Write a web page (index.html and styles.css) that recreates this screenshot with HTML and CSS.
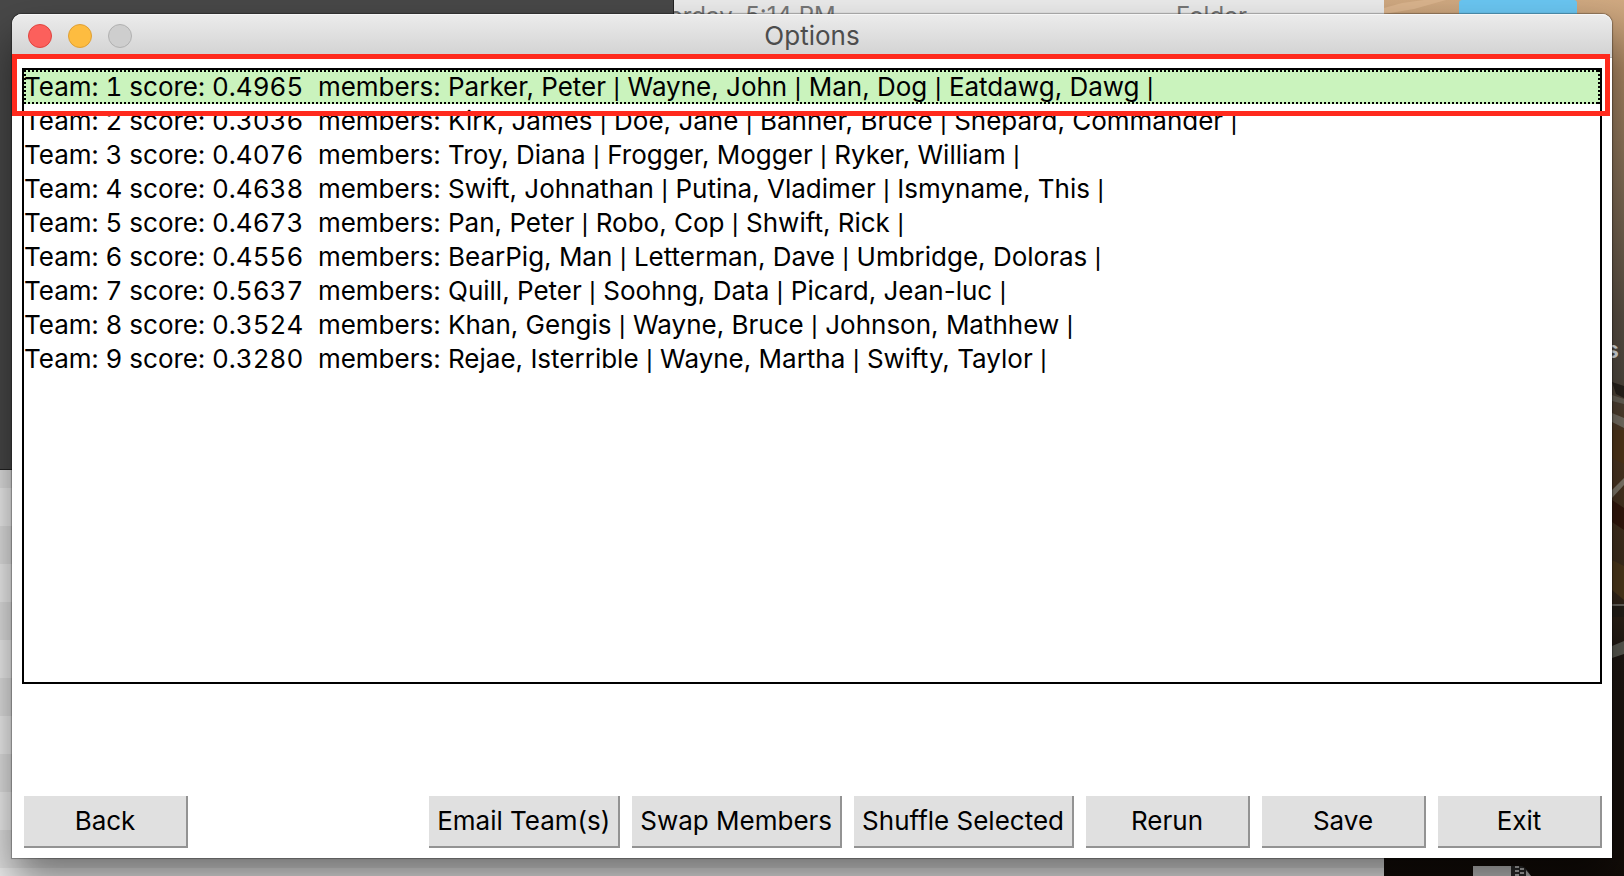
FILE: index.html
```html
<!DOCTYPE html>
<html lang="en">
<head>
<meta charset="utf-8">
<title>Options</title>
<link rel="stylesheet" href="styles.css">
</head>
<body>
<div class="desktop">
  <div class="wallpaper" aria-hidden="true">
    <svg class="scene" viewBox="0 0 240 876" preserveAspectRatio="none">
      <defs>
        <linearGradient id="dune" x1="0" y1="0" x2="0" y2="1">
          <stop offset="0" stop-color="#d0a981"/>
          <stop offset="0.08" stop-color="#ad8964"/>
          <stop offset="0.2" stop-color="#8a735a"/>
          <stop offset="0.36" stop-color="#5d5246"/>
          <stop offset="0.43" stop-color="#524b42"/>
          <stop offset="0.5" stop-color="#523a24"/>
          <stop offset="0.65" stop-color="#3f2f1e"/>
          <stop offset="0.75" stop-color="#1f1813"/>
          <stop offset="1" stop-color="#120c08"/>
        </linearGradient>
      </defs>
      <rect width="240" height="876" fill="url(#dune)"/>
      <path d="M0 8 18 3 40 0H62L30 9 0 14Z" fill="#dab48d"/>
      <path d="M228 382 240 386V398L232 394Z" fill="#29231d"/>
      <path d="M228 395 240 399V404L228 401Z" fill="#6d675b"/>
      <path d="M228 413 240 418V428L228 422Z" fill="#7b7468"/>
      <path d="M228 430H240V464L228 458Z" fill="#54381a"/>
      <path d="M228 490 240 478V485L228 498Z" fill="#857d6f"/>
      <path d="M228 500 240 508V530L228 522Z" fill="#35180c"/>
      <path d="M228 560 240 566V600L228 590Z" fill="#4f3a1c"/>
      <path d="M228 604H240V606H228Z" fill="#6c6961"/>
      <path d="M228 606H240V617H228Z" fill="#252019"/>
      <path d="M228 646 240 641V654L228 658Z" fill="#5d5d54"/>
    </svg>
    <div class="folder-icon"></div>
    <svg class="zip-icon" width="58" height="10" viewBox="0 0 58 10">
      <path d="M0 0H38V10H0Z" fill="#c4c4c4"/>
      <path d="M38 0H49Q55 3 58 10H38Z" fill="#2c2c2c"/>
      <path d="M42 1H46M47 3H51M42 5H46M47 7H51M42 9H46" stroke="#b8b8b8" stroke-width="2"/>
      <path d="M53 4 58 10H53Z" fill="#b8b8b8"/>
    </svg>
    <span class="icon-label">Files</span>
  </div>
  <div class="finder">
    <div class="finder-row"><span class="finder-date">Yesterday, 5:14 PM</span><span class="finder-kind">Folder</span></div>
  </div>
  <div class="editor"></div>

  <main class="window">
    <header class="titlebar">
      <div class="lights">
        <button class="light close" aria-label="Close"></button>
        <button class="light minimize" aria-label="Minimize"></button>
        <button class="light zoom" aria-label="Zoom" disabled></button>
      </div>
      <h1 class="title">Options</h1>
    </header>
    <div class="content">
      <ul class="teams" role="listbox" aria-label="Teams">
        <li class="team selected" role="option" aria-selected="true"><span class="score">Team: 1 score: 0.4965</span>  members: Parker, Peter <span class="sep">|</span> Wayne, John <span class="sep">|</span> Man, Dog <span class="sep">|</span> Eatdawg, Dawg <span class="sep">|</span></li>
        <li class="team" role="option"><span class="score">Team: 2 score: 0.3036</span>  members: Kirk, James <span class="sep">|</span> Doe, Jane <span class="sep">|</span> Banner, Bruce <span class="sep">|</span> Shepard, Commander <span class="sep">|</span></li>
        <li class="team" role="option"><span class="score">Team: 3 score: 0.4076</span>  members: Troy, Diana <span class="sep">|</span> Frogger, Mogger <span class="sep">|</span> Ryker, William <span class="sep">|</span></li>
        <li class="team" role="option"><span class="score">Team: 4 score: 0.4638</span>  members: Swift, Johnathan <span class="sep">|</span> Putina, Vladimer <span class="sep">|</span> Ismyname, This <span class="sep">|</span></li>
        <li class="team" role="option"><span class="score">Team: 5 score: 0.4673</span>  members: Pan, Peter <span class="sep">|</span> Robo, Cop <span class="sep">|</span> Shwift, Rick <span class="sep">|</span></li>
        <li class="team" role="option"><span class="score">Team: 6 score: 0.4556</span>  members: BearPig, Man <span class="sep">|</span> Letterman, Dave <span class="sep">|</span> Umbridge, Doloras <span class="sep">|</span></li>
        <li class="team" role="option"><span class="score">Team: 7 score: 0.5637</span>  members: Quill, Peter <span class="sep">|</span> Soohng, Data <span class="sep">|</span> Picard, Jean-luc <span class="sep">|</span></li>
        <li class="team" role="option"><span class="score">Team: 8 score: 0.3524</span>  members: Khan, Gengis <span class="sep">|</span> Wayne, Bruce <span class="sep">|</span> Johnson, Mathhew <span class="sep">|</span></li>
        <li class="team" role="option"><span class="score">Team: 9 score: 0.3280</span>  members: Rejae, Isterrible <span class="sep">|</span> Wayne, Martha <span class="sep">|</span> Swifty, Taylor <span class="sep">|</span></li>
      </ul>
      <footer class="actions">
        <button class="btn back">Back</button>
        <button class="btn">Email Team(s)</button>
        <button class="btn">Swap Members</button>
        <button class="btn">Shuffle Selected</button>
        <button class="btn">Rerun</button>
        <button class="btn">Save</button>
        <button class="btn">Exit</button>
      </footer>
    </div>
    <div class="highlight"></div>
  </main>
</div>
</body>
</html>
```
FILE: styles.css
```css
* {
  box-sizing: border-box;
}

body {
  margin: 0;
  font-family: Inter, Roboto, sans-serif;
  font-size: 26px;
  color: #000;
}

.desktop {
  position: relative;
  display: flex;
  min-height: 100vh;
  padding: 14px 12px 18px;
  overflow: hidden;
  background: #120c08;
}

/* Things lying behind the window */
.wallpaper {
  position: absolute;
  top: 0;
  right: 0;
  bottom: 0;
  width: 240px;
}

.scene {
  display: block;
  width: 100%;
  height: 100%;
}

.folder-icon {
  position: absolute;
  top: 0;
  left: 75px;
  width: 118px;
  height: 20px;
  border-radius: 3px 3px 0 0;
  background: #6ac6f2;
}

.zip-icon {
  position: absolute;
  bottom: 0;
  left: 89px;
}

.icon-label {
  position: absolute;
  top: 337px;
  right: 5px;
  font-size: 24px;
  font-weight: 600;
  line-height: 26px;
  color: #e6ecf0;
}

.finder {
  position: absolute;
  top: 0;
  left: 0;
  right: 240px;
  bottom: 0;
  background:
    linear-gradient(#ebebeb 0 13px, transparent 13px),
    repeating-linear-gradient(#f2f2f2 0 38px, #e4e4e4 38px 76px) 0 32px;
}

.finder-row {
  display: grid;
  grid-template-columns: 1fr 208px;
  padding-left: 620px;
  font-size: 24px;
  line-height: 32px;
  color: #777;
}

.editor {
  position: absolute;
  top: 0;
  left: 0;
  width: 674px;
  height: 470px;
  border-right: 1px solid #222;
  border-bottom: 1px solid #222;
  background: #484848;
}

/* Application window */
.window {
  position: relative;
  display: flex;
  flex: 1;
  flex-direction: column;
  border-radius: 10px 10px 0 0;
  background: #fff;
  box-shadow: 0 0 1px 1px rgba(0, 0, 0, 0.3), 0 24px 44px rgba(0, 0, 0, 0.5);
}

.titlebar {
  display: grid;
  grid-template-columns: 1fr auto 1fr;
  align-items: center;
  height: 44px;
  padding: 0 16px;
  border-bottom: 1px solid #b4b4b4;
  border-radius: 10px 10px 0 0;
  background: linear-gradient(#ececec, #d2d2d2);
  box-shadow: inset 0 1px #f6f6f6;
}

.lights {
  display: flex;
  gap: 16px;
}

.light {
  width: 24px;
  height: 24px;
  padding: 0;
  border: 1px solid #e0443f;
  border-radius: 50%;
  background: #fc605c;
}

.minimize {
  border-color: #dfa035;
  background: #fdbc40;
}

.zoom {
  border-color: #b1b1b1;
  background: #cecece;
}

.title {
  margin: 0;
  font-size: 26px;
  font-weight: 400;
  line-height: 32px;
  color: #4d4d4d;
}

.content {
  display: flex;
  flex: 1;
  flex-direction: column;
  gap: 112px;
  padding: 10px;
}

.teams {
  flex: 1;
  margin: 0;
  padding: 0;
  border: 2px solid #000;
  list-style: none;
}

.team {
  height: 34px;
  line-height: 34px;
  white-space: pre;
}

.score {
  font-variant-numeric: tabular-nums;
}

.sep {
  font-size: 20px;
  font-weight: 500;
  line-height: 20px;
}

.selected {
  background-color: #caf3bd;
  background-image:
    repeating-linear-gradient(90deg, #000 0 2px, transparent 2px 4px),
    repeating-linear-gradient(90deg, #000 0 2px, transparent 2px 4px),
    repeating-linear-gradient(#000 0 2px, transparent 2px 4px),
    repeating-linear-gradient(#000 0 2px, transparent 2px 4px);
  background-position: top, bottom, left, right;
  background-repeat: no-repeat;
  background-size: 100% 2px, 100% 2px, 2px 100%, 2px 100%;
}

.actions {
  display: flex;
  gap: 12px;
  padding-left: 2px;
}

.btn {
  min-width: 164px;
  height: 52px;
  padding: 0 8px 2px;
  border: solid #939393;
  border-width: 0 2px 2px 0;
  background: #e0e0e0;
  font: inherit;
  color: #000;
}

.back {
  margin-right: auto;
}

/* Annotation frame round the selected row */
.highlight {
  position: absolute;
  top: 40px;
  left: 0;
  right: 2px;
  height: 62px;
  border: 5px solid #ff2a1d;
  pointer-events: none;
}
```
